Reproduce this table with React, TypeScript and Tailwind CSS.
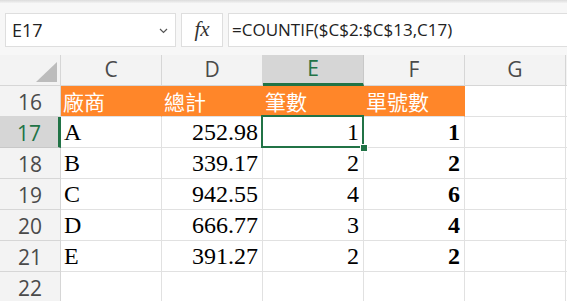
import React from 'react';

// 欄寬、列高（照截圖量的）
const colLetters = ['C', 'D', 'E', 'F', 'G'];

type Row = { num: number; cells: string[] };

const rows: Row[] = [
  { num: 16, cells: ['廠商', '總計', '筆數', '單號數', ''] },
  { num: 17, cells: ['A', '252.98', '1', '1', ''] },
  { num: 18, cells: ['B', '339.17', '2', '2', ''] },
  { num: 19, cells: ['C', '942.55', '4', '6', ''] },
  { num: 20, cells: ['D', '666.77', '3', '4', ''] },
  { num: 21, cells: ['E', '391.27', '2', '2', ''] },
  { num: 22, cells: ['', '', '', '', ''] },
];

const uiFont = { fontFamily: '"Open Sans", "Noto Sans", sans-serif' };
const cellFont = { fontFamily: '"Liberation Serif", "Noto Sans CJK TC", serif' };

const FormulaBar: React.FC = () => (
  <div className="flex items-stretch gap-[5px] pl-[5px] pt-[10px] pb-[11px] h-[55px]" style={uiFont}>
    <div className="w-[171px] bg-white border border-[#dedede] flex items-center justify-between pl-[6px] pr-[7px]">
      <span className="text-[18px] text-[#222]">E17</span>
      <svg width="9" height="6" viewBox="0 0 9 6" className="mt-[2px]">
        <path d="M1 1 L4.5 4.5 L8 1" fill="none" stroke="#555" strokeWidth="1.2" />
      </svg>
    </div>
    <div className="w-[42px] bg-white border border-[#dedede] flex items-center justify-center">
      <span className="text-[21px] italic text-[#333]" style={{ fontFamily: '"Liberation Serif", serif' }}>fx</span>
    </div>
    <div className="flex-1 bg-white border border-[#dedede] border-r-0 flex items-center pl-[3px]">
      <span className="text-[17px] text-[#222]">=COUNTIF($C$2:$C$13,C17)</span>
    </div>
  </div>
);

const Corner: React.FC = () => (
  <div className="h-[31px] border-r border-b border-[#d6d6d6] bg-[#f3f3f3] flex items-end justify-end pr-[3px] pb-[3px]">
    <svg width="21" height="20" viewBox="0 0 21 20">
      <polygon points="21,0 21,20 0,20" fill="#bcbcbc" />
    </svg>
  </div>
);

export default function App() {
  return (
    <div className="w-[567px] h-[301px] overflow-hidden bg-[#f7f7f7] relative">
      <div className="h-[3px] bg-gradient-to-b from-[#dcdcdc] to-[#f2f2f2]" />
      <FormulaBar />
      <div className="grid grid-cols-[61px_101px_101px_101px_101px_101px_101px] bg-white -mt-[3px]">
        <Corner />
        {colLetters.map(c => (
          <div
            key={c}
            style={uiFont}
            className={
              c === 'E'
                ? 'h-[31px] bg-[#d6d6d6] border-r border-[#c8c8c8] border-b-[3px] border-b-[#217346] flex items-center justify-center text-[21px] text-[#217346]'
                : 'h-[31px] bg-[#f3f3f3] border-r border-b border-[#d6d6d6] flex items-center justify-center text-[21px] text-[#4a4a4a]'
            }
          >
            {c}
          </div>
        ))}
        <div className="h-[31px] bg-[#f3f3f3] border-b border-[#d6d6d6]" />

        {rows.map(row => (
          <React.Fragment key={row.num}>
            <div
              style={uiFont}
              className={
                row.num === 17
                  ? 'h-[31px] bg-[#d6d6d6] border-r-[3px] border-r-[#217346] border-b border-b-[#c8c8c8] flex items-center justify-center pt-[3px] text-[21px] text-[#217346]'
                  : 'h-[31px] bg-[#f3f3f3] border-r border-b border-[#d6d6d6] flex items-center justify-center pt-[3px] text-[21px] text-[#4a4a4a]'
              }
            >
              {row.num}
            </div>
            {row.cells.map((v, i) => {
              const isHead = row.num === 16 && i < 4;
              const isSel = row.num === 17 && i === 2;
              const left = i === 0;
              return (
                <div
                  key={i}
                  style={cellFont}
                  className={[
                    'h-[31px] border-b border-[#e1e1e1] flex relative',
                    isHead ? 'bg-[#ff8629] border-r border-r-[#ff8629] text-white text-[21px] items-center pt-[5px] pl-[2px]' : 'border-r border-r-[#e1e1e1] text-black text-[24px] items-end pb-[1px] leading-[28px]',
                    !isHead && (left ? 'pl-[3px]' : 'justify-end pr-[4px]'),
                    !isHead && i === 3 ? 'font-bold' : '',
                  ].join(' ')}
                >
                  {v}
                  {isSel && (
                    <>
                      <div className="absolute z-10 -left-[2px] -top-[2px] -right-[1px] -bottom-[1px] border-2 border-[#217346]" />
                      <div className="absolute z-10 -right-[5px] -bottom-[5px] w-[8px] h-[8px] bg-[#217346] border border-white" />
                    </>
                  )}
                </div>
              );
            })}
            <div className="h-[31px] border-b border-[#e1e1e1]" />
          </React.Fragment>
        ))}
      </div>
    </div>
  );
}
